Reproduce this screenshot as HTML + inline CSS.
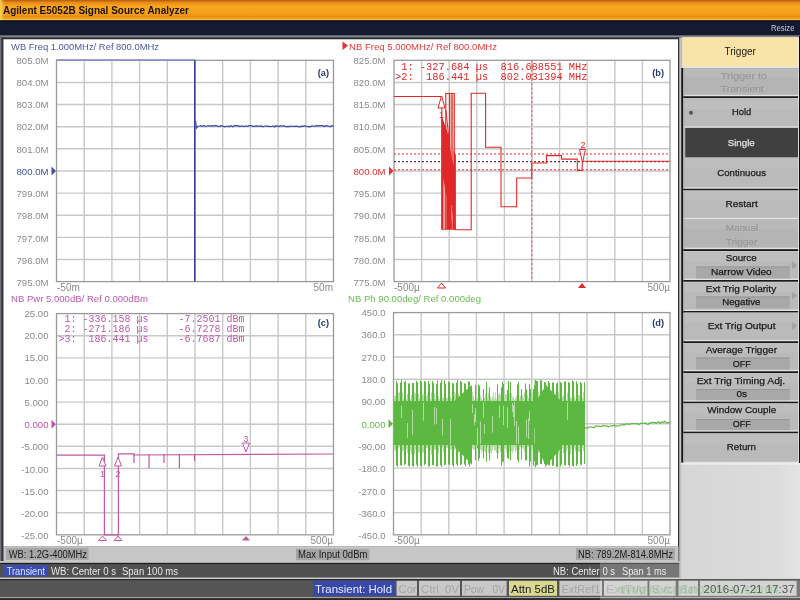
<!DOCTYPE html>
<html><head><meta charset="utf-8"><title>E5052B</title>
<style>html,body{margin:0;padding:0;width:800px;height:600px;overflow:hidden;background:#4c4c4c}svg{display:block;will-change:transform}</style>
</head><body><svg width="800" height="600" viewBox="0 0 800 600">
<rect x="0" y="0" width="800" height="600" fill="#4c4c4c"/>
<defs><linearGradient id="tg" x1="0" y1="0" x2="0" y2="1">
<stop offset="0" stop-color="#b85a10"/><stop offset="0.12" stop-color="#e48a18"/>
<stop offset="0.3" stop-color="#f8a61e"/><stop offset="0.6" stop-color="#f6a21c"/><stop offset="0.84" stop-color="#ea8c18"/><stop offset="0.93" stop-color="#f2b030"/><stop offset="1" stop-color="#f8d040"/></linearGradient>
<linearGradient id="tgl" x1="0" y1="0" x2="1" y2="0">
<stop offset="0" stop-color="#ffe060" stop-opacity="0.8"/><stop offset="0.006" stop-color="#ffe060" stop-opacity="0"/></linearGradient>
</defs>
<rect x="0" y="0" width="800" height="20.5" fill="url(#tg)"/>
<rect x="0" y="0" width="800" height="20.5" fill="url(#tgl)"/>
<text x="3" y="14.3" font-family="Liberation Sans" font-size="10" fill="#1c1408" text-anchor="start" textLength="186" lengthAdjust="spacingAndGlyphs" font-weight="bold" >Agilent E5052B Signal Source Analyzer</text>
<rect x="0" y="20.5" width="800" height="15" fill="#141a30"/>
<rect x="0" y="20.5" width="800" height="1" fill="#0a0c14"/>
<text x="771" y="30.6" font-family="Liberation Sans" font-size="8.6" fill="#c8ccd8" text-anchor="start" textLength="23.5" lengthAdjust="spacingAndGlyphs" >Resize</text>
<rect x="0" y="35.5" width="800" height="2" fill="#8a8a92"/>
<rect x="0" y="37.5" width="681" height="1.8" fill="#2c2c34"/>
<rect x="0" y="35.5" width="1.5" height="528" fill="#74747c"/>
<rect x="1.5" y="37.5" width="2" height="526" fill="#34343c"/>
<rect x="3.5" y="39.3" width="675" height="507" fill="#ffffff"/>
<rect x="678" y="37.5" width="1.3" height="526" fill="#303036"/>
<line x1="84.20" y1="60.3" x2="84.20" y2="281.6" stroke="#c8c8c8" stroke-width="1.4"/>
<line x1="111.90" y1="60.3" x2="111.90" y2="281.6" stroke="#c8c8c8" stroke-width="1.4"/>
<line x1="139.60" y1="60.3" x2="139.60" y2="281.6" stroke="#c8c8c8" stroke-width="1.4"/>
<line x1="167.30" y1="60.3" x2="167.30" y2="281.6" stroke="#c8c8c8" stroke-width="1.4"/>
<line x1="195.00" y1="60.3" x2="195.00" y2="281.6" stroke="#c8c8c8" stroke-width="1.4"/>
<line x1="222.70" y1="60.3" x2="222.70" y2="281.6" stroke="#c8c8c8" stroke-width="1.4"/>
<line x1="250.40" y1="60.3" x2="250.40" y2="281.6" stroke="#c8c8c8" stroke-width="1.4"/>
<line x1="278.10" y1="60.3" x2="278.10" y2="281.6" stroke="#c8c8c8" stroke-width="1.4"/>
<line x1="305.80" y1="60.3" x2="305.80" y2="281.6" stroke="#c8c8c8" stroke-width="1.4"/>
<line x1="56.5" y1="82.43" x2="333.5" y2="82.43" stroke="#c8c8c8" stroke-width="1.4"/>
<line x1="56.5" y1="104.56" x2="333.5" y2="104.56" stroke="#c8c8c8" stroke-width="1.4"/>
<line x1="56.5" y1="126.69" x2="333.5" y2="126.69" stroke="#c8c8c8" stroke-width="1.4"/>
<line x1="56.5" y1="148.82" x2="333.5" y2="148.82" stroke="#c8c8c8" stroke-width="1.4"/>
<line x1="56.5" y1="170.95" x2="333.5" y2="170.95" stroke="#c8c8c8" stroke-width="1.4"/>
<line x1="56.5" y1="193.08" x2="333.5" y2="193.08" stroke="#c8c8c8" stroke-width="1.4"/>
<line x1="56.5" y1="215.21" x2="333.5" y2="215.21" stroke="#c8c8c8" stroke-width="1.4"/>
<line x1="56.5" y1="237.34" x2="333.5" y2="237.34" stroke="#c8c8c8" stroke-width="1.4"/>
<line x1="56.5" y1="259.47" x2="333.5" y2="259.47" stroke="#c8c8c8" stroke-width="1.4"/>
<rect x="56.5" y="60.3" width="277.0" height="221.3" fill="none" stroke="#9a9a9a" stroke-width="1.3"/>
<line x1="421.60" y1="60.3" x2="421.60" y2="281.6" stroke="#c8c8c8" stroke-width="1.4"/>
<line x1="449.20" y1="60.3" x2="449.20" y2="281.6" stroke="#c8c8c8" stroke-width="1.4"/>
<line x1="476.80" y1="60.3" x2="476.80" y2="281.6" stroke="#c8c8c8" stroke-width="1.4"/>
<line x1="504.40" y1="60.3" x2="504.40" y2="281.6" stroke="#c8c8c8" stroke-width="1.4"/>
<line x1="532.00" y1="60.3" x2="532.00" y2="281.6" stroke="#c8c8c8" stroke-width="1.4"/>
<line x1="559.60" y1="60.3" x2="559.60" y2="281.6" stroke="#c8c8c8" stroke-width="1.4"/>
<line x1="587.20" y1="60.3" x2="587.20" y2="281.6" stroke="#c8c8c8" stroke-width="1.4"/>
<line x1="614.80" y1="60.3" x2="614.80" y2="281.6" stroke="#c8c8c8" stroke-width="1.4"/>
<line x1="642.40" y1="60.3" x2="642.40" y2="281.6" stroke="#c8c8c8" stroke-width="1.4"/>
<line x1="394" y1="82.43" x2="670" y2="82.43" stroke="#c8c8c8" stroke-width="1.4"/>
<line x1="394" y1="104.56" x2="670" y2="104.56" stroke="#c8c8c8" stroke-width="1.4"/>
<line x1="394" y1="126.69" x2="670" y2="126.69" stroke="#c8c8c8" stroke-width="1.4"/>
<line x1="394" y1="148.82" x2="670" y2="148.82" stroke="#c8c8c8" stroke-width="1.4"/>
<line x1="394" y1="170.95" x2="670" y2="170.95" stroke="#c8c8c8" stroke-width="1.4"/>
<line x1="394" y1="193.08" x2="670" y2="193.08" stroke="#c8c8c8" stroke-width="1.4"/>
<line x1="394" y1="215.21" x2="670" y2="215.21" stroke="#c8c8c8" stroke-width="1.4"/>
<line x1="394" y1="237.34" x2="670" y2="237.34" stroke="#c8c8c8" stroke-width="1.4"/>
<line x1="394" y1="259.47" x2="670" y2="259.47" stroke="#c8c8c8" stroke-width="1.4"/>
<rect x="394" y="60.3" width="276" height="221.3" fill="none" stroke="#9a9a9a" stroke-width="1.3"/>
<line x1="84.20" y1="313.6" x2="84.20" y2="534.8" stroke="#c8c8c8" stroke-width="1.4"/>
<line x1="111.90" y1="313.6" x2="111.90" y2="534.8" stroke="#c8c8c8" stroke-width="1.4"/>
<line x1="139.60" y1="313.6" x2="139.60" y2="534.8" stroke="#c8c8c8" stroke-width="1.4"/>
<line x1="167.30" y1="313.6" x2="167.30" y2="534.8" stroke="#c8c8c8" stroke-width="1.4"/>
<line x1="195.00" y1="313.6" x2="195.00" y2="534.8" stroke="#c8c8c8" stroke-width="1.4"/>
<line x1="222.70" y1="313.6" x2="222.70" y2="534.8" stroke="#c8c8c8" stroke-width="1.4"/>
<line x1="250.40" y1="313.6" x2="250.40" y2="534.8" stroke="#c8c8c8" stroke-width="1.4"/>
<line x1="278.10" y1="313.6" x2="278.10" y2="534.8" stroke="#c8c8c8" stroke-width="1.4"/>
<line x1="305.80" y1="313.6" x2="305.80" y2="534.8" stroke="#c8c8c8" stroke-width="1.4"/>
<line x1="56.5" y1="335.72" x2="333.5" y2="335.72" stroke="#c8c8c8" stroke-width="1.4"/>
<line x1="56.5" y1="357.84" x2="333.5" y2="357.84" stroke="#c8c8c8" stroke-width="1.4"/>
<line x1="56.5" y1="379.96" x2="333.5" y2="379.96" stroke="#c8c8c8" stroke-width="1.4"/>
<line x1="56.5" y1="402.08" x2="333.5" y2="402.08" stroke="#c8c8c8" stroke-width="1.4"/>
<line x1="56.5" y1="424.20" x2="333.5" y2="424.20" stroke="#c8c8c8" stroke-width="1.4"/>
<line x1="56.5" y1="446.32" x2="333.5" y2="446.32" stroke="#c8c8c8" stroke-width="1.4"/>
<line x1="56.5" y1="468.44" x2="333.5" y2="468.44" stroke="#c8c8c8" stroke-width="1.4"/>
<line x1="56.5" y1="490.56" x2="333.5" y2="490.56" stroke="#c8c8c8" stroke-width="1.4"/>
<line x1="56.5" y1="512.68" x2="333.5" y2="512.68" stroke="#c8c8c8" stroke-width="1.4"/>
<rect x="56.5" y="313.6" width="277.0" height="221.19999999999993" fill="none" stroke="#9a9a9a" stroke-width="1.3"/>
<line x1="421.15" y1="312.6" x2="421.15" y2="534.8" stroke="#c8c8c8" stroke-width="1.4"/>
<line x1="448.80" y1="312.6" x2="448.80" y2="534.8" stroke="#c8c8c8" stroke-width="1.4"/>
<line x1="476.45" y1="312.6" x2="476.45" y2="534.8" stroke="#c8c8c8" stroke-width="1.4"/>
<line x1="504.10" y1="312.6" x2="504.10" y2="534.8" stroke="#c8c8c8" stroke-width="1.4"/>
<line x1="531.75" y1="312.6" x2="531.75" y2="534.8" stroke="#c8c8c8" stroke-width="1.4"/>
<line x1="559.40" y1="312.6" x2="559.40" y2="534.8" stroke="#c8c8c8" stroke-width="1.4"/>
<line x1="587.05" y1="312.6" x2="587.05" y2="534.8" stroke="#c8c8c8" stroke-width="1.4"/>
<line x1="614.70" y1="312.6" x2="614.70" y2="534.8" stroke="#c8c8c8" stroke-width="1.4"/>
<line x1="642.35" y1="312.6" x2="642.35" y2="534.8" stroke="#c8c8c8" stroke-width="1.4"/>
<line x1="393.5" y1="334.82" x2="670" y2="334.82" stroke="#c8c8c8" stroke-width="1.4"/>
<line x1="393.5" y1="357.04" x2="670" y2="357.04" stroke="#c8c8c8" stroke-width="1.4"/>
<line x1="393.5" y1="379.26" x2="670" y2="379.26" stroke="#c8c8c8" stroke-width="1.4"/>
<line x1="393.5" y1="401.48" x2="670" y2="401.48" stroke="#c8c8c8" stroke-width="1.4"/>
<line x1="393.5" y1="423.70" x2="670" y2="423.70" stroke="#c8c8c8" stroke-width="1.4"/>
<line x1="393.5" y1="445.92" x2="670" y2="445.92" stroke="#c8c8c8" stroke-width="1.4"/>
<line x1="393.5" y1="468.14" x2="670" y2="468.14" stroke="#c8c8c8" stroke-width="1.4"/>
<line x1="393.5" y1="490.36" x2="670" y2="490.36" stroke="#c8c8c8" stroke-width="1.4"/>
<line x1="393.5" y1="512.58" x2="670" y2="512.58" stroke="#c8c8c8" stroke-width="1.4"/>
<rect x="393.5" y="312.6" width="276.5" height="222.19999999999993" fill="none" stroke="#9a9a9a" stroke-width="1.3"/>
<text x="48.5" y="63.599999999999994" font-family="Liberation Sans" font-size="9.6" fill="#8a8a8a" text-anchor="end" >805.0M</text>
<text x="48.5" y="85.85" font-family="Liberation Sans" font-size="9.6" fill="#8a8a8a" text-anchor="end" >804.0M</text>
<text x="48.5" y="108.10000000000001" font-family="Liberation Sans" font-size="9.6" fill="#8a8a8a" text-anchor="end" >803.0M</text>
<text x="48.5" y="130.35000000000002" font-family="Liberation Sans" font-size="9.6" fill="#8a8a8a" text-anchor="end" >802.0M</text>
<text x="48.5" y="152.60000000000002" font-family="Liberation Sans" font-size="9.6" fill="#8a8a8a" text-anchor="end" >801.0M</text>
<text x="48.5" y="174.85000000000002" font-family="Liberation Sans" font-size="9.6" fill="#4050a0" text-anchor="end" >800.0M</text>
<text x="48.5" y="197.10000000000002" font-family="Liberation Sans" font-size="9.6" fill="#8a8a8a" text-anchor="end" >799.0M</text>
<text x="48.5" y="219.35000000000002" font-family="Liberation Sans" font-size="9.6" fill="#8a8a8a" text-anchor="end" >798.0M</text>
<text x="48.5" y="241.60000000000002" font-family="Liberation Sans" font-size="9.6" fill="#8a8a8a" text-anchor="end" >797.0M</text>
<text x="48.5" y="263.85" font-family="Liberation Sans" font-size="9.6" fill="#8a8a8a" text-anchor="end" >796.0M</text>
<text x="48.5" y="286.1" font-family="Liberation Sans" font-size="9.6" fill="#8a8a8a" text-anchor="end" >795.0M</text>
<text x="385.5" y="63.599999999999994" font-family="Liberation Sans" font-size="9.6" fill="#8a8a8a" text-anchor="end" >825.0M</text>
<text x="385.5" y="85.85" font-family="Liberation Sans" font-size="9.6" fill="#8a8a8a" text-anchor="end" >820.0M</text>
<text x="385.5" y="108.10000000000001" font-family="Liberation Sans" font-size="9.6" fill="#8a8a8a" text-anchor="end" >815.0M</text>
<text x="385.5" y="130.35000000000002" font-family="Liberation Sans" font-size="9.6" fill="#8a8a8a" text-anchor="end" >810.0M</text>
<text x="385.5" y="152.60000000000002" font-family="Liberation Sans" font-size="9.6" fill="#8a8a8a" text-anchor="end" >805.0M</text>
<text x="385.5" y="174.85000000000002" font-family="Liberation Sans" font-size="9.6" fill="#e03030" text-anchor="end" >800.0M</text>
<text x="385.5" y="197.10000000000002" font-family="Liberation Sans" font-size="9.6" fill="#8a8a8a" text-anchor="end" >795.0M</text>
<text x="385.5" y="219.35000000000002" font-family="Liberation Sans" font-size="9.6" fill="#8a8a8a" text-anchor="end" >790.0M</text>
<text x="385.5" y="241.60000000000002" font-family="Liberation Sans" font-size="9.6" fill="#8a8a8a" text-anchor="end" >785.0M</text>
<text x="385.5" y="263.85" font-family="Liberation Sans" font-size="9.6" fill="#8a8a8a" text-anchor="end" >780.0M</text>
<text x="385.5" y="286.1" font-family="Liberation Sans" font-size="9.6" fill="#8a8a8a" text-anchor="end" >775.0M</text>
<text x="48.5" y="316.90000000000003" font-family="Liberation Sans" font-size="9.6" fill="#8a8a8a" text-anchor="end" >25.00</text>
<text x="48.5" y="339.14000000000004" font-family="Liberation Sans" font-size="9.6" fill="#8a8a8a" text-anchor="end" >20.00</text>
<text x="48.5" y="361.38000000000005" font-family="Liberation Sans" font-size="9.6" fill="#8a8a8a" text-anchor="end" >15.00</text>
<text x="48.5" y="383.62" font-family="Liberation Sans" font-size="9.6" fill="#8a8a8a" text-anchor="end" >10.00</text>
<text x="48.5" y="405.86" font-family="Liberation Sans" font-size="9.6" fill="#8a8a8a" text-anchor="end" >5.000</text>
<text x="48.5" y="428.1" font-family="Liberation Sans" font-size="9.6" fill="#c050a8" text-anchor="end" >0.000</text>
<text x="48.5" y="450.34" font-family="Liberation Sans" font-size="9.6" fill="#8a8a8a" text-anchor="end" >-5.000</text>
<text x="48.5" y="472.58" font-family="Liberation Sans" font-size="9.6" fill="#8a8a8a" text-anchor="end" >-10.00</text>
<text x="48.5" y="494.82" font-family="Liberation Sans" font-size="9.6" fill="#8a8a8a" text-anchor="end" >-15.00</text>
<text x="48.5" y="517.06" font-family="Liberation Sans" font-size="9.6" fill="#8a8a8a" text-anchor="end" >-20.00</text>
<text x="48.5" y="539.3" font-family="Liberation Sans" font-size="9.6" fill="#8a8a8a" text-anchor="end" >-25.00</text>
<text x="385.5" y="315.90000000000003" font-family="Liberation Sans" font-size="9.6" fill="#8a8a8a" text-anchor="end" >450.0</text>
<text x="385.5" y="338.24" font-family="Liberation Sans" font-size="9.6" fill="#8a8a8a" text-anchor="end" >360.0</text>
<text x="385.5" y="360.58000000000004" font-family="Liberation Sans" font-size="9.6" fill="#8a8a8a" text-anchor="end" >270.0</text>
<text x="385.5" y="382.92" font-family="Liberation Sans" font-size="9.6" fill="#8a8a8a" text-anchor="end" >180.0</text>
<text x="385.5" y="405.26" font-family="Liberation Sans" font-size="9.6" fill="#8a8a8a" text-anchor="end" >90.00</text>
<text x="385.5" y="427.59999999999997" font-family="Liberation Sans" font-size="9.6" fill="#60b848" text-anchor="end" >0.000</text>
<text x="385.5" y="449.94" font-family="Liberation Sans" font-size="9.6" fill="#8a8a8a" text-anchor="end" >-90.00</text>
<text x="385.5" y="472.28" font-family="Liberation Sans" font-size="9.6" fill="#8a8a8a" text-anchor="end" >-180.0</text>
<text x="385.5" y="494.61999999999995" font-family="Liberation Sans" font-size="9.6" fill="#8a8a8a" text-anchor="end" >-270.0</text>
<text x="385.5" y="516.9599999999999" font-family="Liberation Sans" font-size="9.6" fill="#8a8a8a" text-anchor="end" >-360.0</text>
<text x="385.5" y="539.3" font-family="Liberation Sans" font-size="9.6" fill="#8a8a8a" text-anchor="end" >-450.0</text>
<path d="M51.5,166.45 L56,170.95 L51.5,175.45 Z" fill="#4050a0"/>
<path d="M389.0,166.45 L393.5,170.95 L389.0,175.45 Z" fill="#e03030"/>
<path d="M51.5,419.7 L56,424.2 L51.5,428.7 Z" fill="#c050a8"/>
<path d="M388.5,419.2 L393,423.7 L388.5,428.2 Z" fill="#60b848"/>
<text x="11" y="49.6" font-family="Liberation Sans" font-size="9.5" fill="#4a58a0" text-anchor="start" textLength="148" lengthAdjust="spacingAndGlyphs" >WB Freq 1.000MHz/ Ref 800.0MHz</text>
<path d="M342.5,41.5 L348,45.8 L342.5,50 Z" fill="#e03030"/>
<text x="349" y="49.6" font-family="Liberation Sans" font-size="9.5" fill="#e03838" text-anchor="start" textLength="148" lengthAdjust="spacingAndGlyphs" >NB Freq 5.000MHz/ Ref 800.0MHz</text>
<text x="11" y="302" font-family="Liberation Sans" font-size="9.5" fill="#c058a8" text-anchor="start" textLength="137" lengthAdjust="spacingAndGlyphs" >NB Pwr 5.000dB/ Ref 0.000dBm</text>
<text x="348" y="302" font-family="Liberation Sans" font-size="9.5" fill="#6cbc54" text-anchor="start" textLength="133" lengthAdjust="spacingAndGlyphs" >NB Ph 90.00deg/ Ref 0.000deg</text>
<text x="57" y="290.5" font-family="Liberation Sans" font-size="10" fill="#8a8a8a" text-anchor="start" >-50m</text>
<text x="333" y="290.5" font-family="Liberation Sans" font-size="10" fill="#8a8a8a" text-anchor="end" >50m</text>
<text x="394" y="290.5" font-family="Liberation Sans" font-size="10" fill="#8a8a8a" text-anchor="start" >-500µ</text>
<text x="670" y="290.5" font-family="Liberation Sans" font-size="10" fill="#8a8a8a" text-anchor="end" >500µ</text>
<text x="57" y="543.7" font-family="Liberation Sans" font-size="10" fill="#8a8a8a" text-anchor="start" >-500µ</text>
<text x="333" y="543.7" font-family="Liberation Sans" font-size="10" fill="#8a8a8a" text-anchor="end" >500µ</text>
<text x="394" y="543.7" font-family="Liberation Sans" font-size="10" fill="#8a8a8a" text-anchor="start" >-500µ</text>
<text x="670" y="543.7" font-family="Liberation Sans" font-size="10" fill="#8a8a8a" text-anchor="end" >500µ</text>
<text x="329" y="76" font-family="Liberation Sans" font-size="9.2" fill="#24386a" text-anchor="end" font-weight="bold" >(a)</text>
<text x="664" y="76" font-family="Liberation Sans" font-size="9.2" fill="#24386a" text-anchor="end" font-weight="bold" >(b)</text>
<text x="329" y="325.7" font-family="Liberation Sans" font-size="9.2" fill="#24386a" text-anchor="end" font-weight="bold" >(c)</text>
<text x="664" y="325.7" font-family="Liberation Sans" font-size="9.2" fill="#24386a" text-anchor="end" font-weight="bold" >(d)</text>
<polyline points="56.5,60.2 194.8,60.2" stroke="#8c8cc4" stroke-width="1.7" fill="none"/>
<line x1="194.8" y1="60.3" x2="194.8" y2="281.6" stroke="#2a3a9c" stroke-width="1.5"/>
<polyline points="195.5,121.0 196.5,128.0 198.0,126.2 199.5,126.0 201.0,125.7 202.5,126.4 204.0,125.6 205.5,126.3 207.0,126.0 208.5,125.6 210.0,126.2 211.5,125.6 213.0,126.1 214.5,125.6 216.0,125.6 217.5,126.1 219.0,126.7 220.5,125.7 222.0,125.8 223.5,126.4 225.0,126.8 226.5,126.3 228.0,126.1 229.5,126.9 231.0,125.6 232.5,126.7 234.0,125.9 235.5,125.7 237.0,125.7 238.5,125.9 240.0,126.6 241.5,125.8 243.0,126.3 244.5,126.4 246.0,126.0 247.5,126.3 249.0,125.6 250.5,125.6 252.0,125.8 253.5,126.5 255.0,126.1 256.5,125.9 258.0,126.3 259.5,126.1 261.0,125.9 262.5,126.6 264.0,126.5 265.5,125.8 267.0,126.3 268.5,126.2 270.0,126.7 271.5,126.5 273.0,125.9 274.5,126.9 276.0,125.7 277.5,126.1 279.0,126.6 280.5,125.7 282.0,126.2 283.5,125.6 285.0,126.4 286.5,126.6 288.0,126.3 289.5,126.7 291.0,125.9 292.5,126.5 294.0,126.3 295.5,126.3 297.0,126.1 298.5,126.7 300.0,126.8 301.5,126.2 303.0,126.4 304.5,125.6 306.0,126.5 307.5,126.4 309.0,126.9 310.5,126.7 312.0,125.9 313.5,126.0 315.0,126.4 316.5,125.5 318.0,126.1 319.5,125.7 321.0,125.7 322.5,125.6 324.0,126.6 325.5,125.7 327.0,125.8 328.5,126.0 330.0,126.7 331.5,125.6 333.0,126.1 333.5,126.3" stroke="#3848a0" stroke-width="1.2" fill="none"/>
<line x1="394" y1="154.0" x2="670" y2="154.0" stroke="#e02828" stroke-width="1" stroke-dasharray="2,2"/>
<line x1="394" y1="161.6" x2="670" y2="161.6" stroke="#503838" stroke-width="1.1" stroke-dasharray="2,2"/>
<line x1="394" y1="169.8" x2="670" y2="169.8" stroke="#e02828" stroke-width="1" stroke-dasharray="2,2"/>
<line x1="531.8" y1="60.3" x2="531.8" y2="281.6" stroke="#e85050" stroke-width="1" stroke-dasharray="2.5,2"/>
<path d="M394,96.5 L441.8,96.5" stroke="#e02828" stroke-width="1.1" fill="none"/>
<path d="M441.5,115 L446.7,130 L452,146 L455.3,155 L455.3,229.8 L441.5,229.8 Z" fill="#e02828"/>
<path d="M443.2,178 L446.5,196 L446.5,229 L443.2,229 Z" fill="#f6a49c"/>
<path d="M449.8,95 L453.6,95 L453.6,165 L449.8,150 Z" fill="#f8b8b0"/>
<path d="M452,205 L452,229" stroke="#f6a49c" stroke-width="1.2" fill="none"/>
<path d="M445.8,93.5 L445.8,229.8 M449.5,93.5 L449.5,229.8 M452,93.5 L452,200 M454.3,93.5 L454.3,229.8 M441.8,96.5 L441.8,229.8 M455.3,155 L455.3,229.8" stroke="#e02828" stroke-width="1.1" fill="none"/>
<path d="M445.3,93.5 L454.8,93.5" stroke="#e02828" stroke-width="1.1" fill="none"/>
<path d="M441.8,120 L455,229 M441.8,150 L452,229 M446,110 L455,200" stroke="#e02828" stroke-width="1" fill="none"/>
<polyline points="455,229.8 471.2,229.8 471.2,93.3 485.6,93.3 485.6,147.2 501,147.2 501,206.7 516.7,206.7 516.7,178 531.8,178 531.8,163 546.5,163 546.5,155.6 561.5,155.6 561.5,159.1 577.3,159.1 577.3,170.5 582,170.5 582.5,161.3 670,161.3" stroke="#e02828" stroke-width="1.1" fill="none"/>
<path d="M441.5,96 L438,108 L445,108 Z" fill="#ffffff" stroke="#e02828" stroke-width="1"/>
<text x="441.5" y="117.5" font-family="Liberation Sans" font-size="9" fill="#e02828" text-anchor="middle" >1</text>
<path d="M582.5,162.5 L579.5,149.5 L585.5,149.5 Z" fill="#ffffff" fill-opacity="0.6" stroke="#e02828" stroke-width="1"/>
<text x="583" y="148" font-family="Liberation Sans" font-size="9" fill="#e02828" text-anchor="middle" >2</text>
<path d="M441.5,283 L437.5,288 L445.5,288 Z" fill="#ffffff" stroke="#e02828" stroke-width="1"/>
<path d="M582,283 L578,288 L586,288 Z" fill="#e02828"/>
<text x="395" y="69.5" font-family="Liberation Mono" font-size="10.2" fill="#e02828" text-anchor="start" textLength="192.5" lengthAdjust="spacingAndGlyphs" style="white-space:pre"> 1: -327.684 µs  816.688551 MHz</text>
<text x="395" y="79.8" font-family="Liberation Mono" font-size="10.2" fill="#e02828" text-anchor="start" textLength="192.5" lengthAdjust="spacingAndGlyphs" style="white-space:pre">&gt;2:  186.441 µs  802.031394 MHz</text>
<polyline points="56.5,455.2 104.4,455.2 104.4,534.8 118.4,534.8 118.4,453.8 670,453.8" stroke="none" fill="none"/>
<polyline points="56.5,455.2 104.4,455.2 104.4,534.8 118.4,534.8 118.4,453.8 134,453.8 134,455 333.5,454" stroke="#c058a4" stroke-width="1.2" fill="none"/>
<line x1="134" y1="454" x2="134" y2="463" stroke="#c058a4" stroke-width="1.2"/>
<line x1="149" y1="454" x2="149" y2="468" stroke="#c058a4" stroke-width="1.2"/>
<line x1="164" y1="454" x2="164" y2="463" stroke="#c058a4" stroke-width="1.2"/>
<line x1="179.4" y1="454" x2="179.4" y2="468" stroke="#c058a4" stroke-width="1.2"/>
<line x1="194.6" y1="454" x2="194.6" y2="461" stroke="#c058a4" stroke-width="1.2"/>
<path d="M102.5,457 L99.0,466 L106.0,466 Z" fill="#ffffff" stroke="#c058a4" stroke-width="1"/>
<text x="102.5" y="476.5" font-family="Liberation Sans" font-size="9" fill="#c058a4" text-anchor="middle" >1</text>
<path d="M102.5,536 L98.5,540.5 L106.5,540.5 Z" fill="#ffffff" stroke="#c058a4" stroke-width="1"/>
<path d="M118,457 L114.5,466 L121.5,466 Z" fill="#ffffff" stroke="#c058a4" stroke-width="1"/>
<text x="118" y="476.5" font-family="Liberation Sans" font-size="9" fill="#c058a4" text-anchor="middle" >2</text>
<path d="M118,536 L114,540.5 L122,540.5 Z" fill="#ffffff" stroke="#c058a4" stroke-width="1"/>
<path d="M246,452 L242.5,443 L249.5,443 Z" fill="#ffffff" stroke="#c058a4" stroke-width="1"/>
<text x="246" y="441.5" font-family="Liberation Sans" font-size="9" fill="#c058a4" text-anchor="middle" >3</text>
<path d="M246,536 L242,540.5 L250,540.5 Z" fill="#c058a4"/>
<text x="58.4" y="321.5" font-family="Liberation Mono" font-size="10" fill="#c058a4" text-anchor="start" style="white-space:pre"> 1: -336.158 µs     -7.2501 dBm</text>
<text x="58.4" y="331.8" font-family="Liberation Mono" font-size="10" fill="#c058a4" text-anchor="start" style="white-space:pre"> 2: -271.186 µs     -6.7278 dBm</text>
<text x="58.4" y="342.1" font-family="Liberation Mono" font-size="10" fill="#c058a4" text-anchor="start" style="white-space:pre">&gt;3:  186.441 µs     -6.7687 dBm</text>
<path d="M394.5,395.6V402.0 M394.5,444.0V450.5 M395.5,395.7V402.0 M395.5,444.0V450.9 M398.5,392.7V402.0 M398.5,444.0V448.5 M399.5,392.3V402.0 M399.5,444.0V447.1 M401.5,405.7V417.8 M402.5,392.2V402.0 M402.5,444.0V451.3 M403.5,398.7V402.0 M403.5,444.0V450.8 M406.5,398.7V402.0 M406.5,444.0V449.3 M407.5,393.8V402.0 M407.5,444.0V452.7 M407.5,423.0V437.8 M410.5,399.3V402.0 M410.5,444.0V451.2 M411.5,395.2V402.0 M411.5,444.0V454.4 M412.5,410.0V434.4 M414.5,392.8V402.0 M414.5,444.0V454.5 M415.5,393.4V402.0 M415.5,444.0V450.5 M418.5,393.7V402.0 M418.5,444.0V452.8 M419.5,398.4V402.0 M419.5,444.0V452.6 M422.5,393.7V402.0 M422.5,444.0V452.9 M423.5,394.6V402.0 M423.5,444.0V452.6 M423.5,402.7V420.6 M426.5,396.6V402.0 M426.5,444.0V448.1 M427.5,393.2V402.0 M427.5,444.0V447.7 M430.5,399.1V402.0 M430.5,444.0V450.2 M431.5,392.8V402.0 M431.5,444.0V454.7 M434.5,393.4V402.0 M434.5,444.0V449.2 M434.5,406.9V424.4 M435.5,398.8V402.0 M435.5,444.0V450.1 M436.5,408.1V423.7 M438.5,396.6V402.0 M438.5,444.0V453.9 M439.5,399.1V402.0 M439.5,444.0V447.2 M442.5,397.6V402.0 M442.5,444.0V447.3 M442.5,419.1V435.3 M443.5,397.8V402.0 M443.5,444.0V452.4 M446.5,398.3V402.0 M446.5,444.0V447.7 M447.5,397.5V402.0 M447.5,444.0V447.8 M450.5,396.7V402.0 M450.5,444.0V450.1 M450.5,419.2V444.1 M451.5,399.0V402.0 M451.5,444.0V449.2 M454.5,392.2V402.0 M454.5,444.0V450.2 M455.5,393.8V402.0 M455.5,444.0V449.4 M458.5,393.6V402.0 M458.5,444.0V453.6 M459.5,397.3V402.0 M459.5,444.0V451.5 M462.5,399.0V402.0 M462.5,444.0V451.9 M463.5,394.5V402.0 M463.5,444.0V453.9 M466.5,395.6V402.0 M466.5,444.0V452.8 M467.5,395.3V402.0 M467.5,444.0V450.0 M469.5,426.2V434.9 M470.5,397.7V402.0 M470.5,444.0V450.4 M471.5,398.3V402.0 M471.5,444.0V454.8 M472.5,392.2V402.0 M472.5,444.0V448.4 M472.5,404.2V413.0 M473.5,395.6V402.0 M473.5,444.0V450.0 M474.5,399.7V402.0 M474.5,444.0V449.5 M474.5,414.3V425.3 M475.5,408.2V422.0 M476.5,396.2V402.0 M476.5,444.0V450.1 M477.5,398.3V402.0 M477.5,444.0V447.8 M477.5,428.0V448.3 M480.5,395.7V402.0 M480.5,444.0V449.8 M480.5,421.7V443.6 M481.5,397.7V402.0 M481.5,444.0V453.3 M482.5,399.8V402.0 M482.5,444.0V450.7 M483.5,402.5V418.0 M484.5,398.1V402.0 M484.5,444.0V451.1 M484.5,424.3V433.4 M485.5,393.4V402.0 M485.5,444.0V452.3 M487.5,397.5V402.0 M487.5,444.0V447.4 M488.5,392.7V402.0 M488.5,444.0V453.2 M490.5,396.5V402.0 M490.5,444.0V452.5 M491.5,399.2V402.0 M491.5,444.0V453.3 M492.5,396.2V402.0 M492.5,444.0V450.4 M492.5,416.1V432.6 M493.5,392.2V402.0 M493.5,444.0V447.2 M494.5,398.4V402.0 M494.5,444.0V450.5 M495.5,392.5V402.0 M495.5,444.0V450.7 M496.5,399.4V402.0 M496.5,444.0V452.8 M498.5,394.5V402.0 M498.5,444.0V453.5 M499.5,393.0V402.0 M499.5,444.0V448.8 M499.5,405.8V417.7 M500.5,394.6V402.0 M500.5,444.0V452.2 M503.5,406.1V424.9 M504.5,396.2V402.0 M504.5,444.0V448.2 M505.5,393.9V402.0 M505.5,444.0V449.1 M506.5,394.5V402.0 M506.5,444.0V452.5 M507.5,407.2V427.5 M509.5,393.0V402.0 M509.5,444.0V451.8 M511.5,392.9V402.0 M511.5,444.0V451.0 M512.5,397.5V402.0 M512.5,444.0V453.5 M512.5,403.2V411.8 M513.5,396.1V402.0 M513.5,444.0V450.5 M513.5,405.5V417.0 M514.5,399.9V402.0 M514.5,444.0V447.6 M514.5,401.9V426.0 M515.5,398.1V402.0 M515.5,444.0V452.4 M516.5,395.4V402.0 M516.5,444.0V450.2 M516.5,421.0V443.4 M518.5,426.8V448.4 M519.5,398.9V402.0 M519.5,444.0V450.0 M520.5,396.0V402.0 M520.5,444.0V447.1 M522.5,395.2V402.0 M522.5,444.0V447.8 M523.5,398.1V402.0 M523.5,444.0V448.9 M524.5,392.6V402.0 M524.5,444.0V452.3 M526.5,419.8V437.5 M527.5,395.1V402.0 M527.5,444.0V447.0 M528.5,398.1V402.0 M528.5,444.0V447.2 M528.5,418.5V439.0 M529.5,411.3V420.9 M531.5,396.5V402.0 M531.5,444.0V447.0 M532.5,392.6V402.0 M532.5,444.0V450.2 M534.5,428.4V443.5 M535.5,396.2V402.0 M535.5,444.0V450.2 M538.5,392.1V402.0 M538.5,444.0V453.0 M538.5,404.7V425.5 M539.5,395.1V402.0 M539.5,444.0V447.8 M542.5,395.8V402.0 M542.5,444.0V447.2 M543.5,396.2V402.0 M543.5,444.0V447.5 M546.5,395.6V402.0 M546.5,444.0V453.4 M546.5,415.8V426.0 M547.5,395.5V402.0 M547.5,444.0V449.7 M550.5,399.6V402.0 M550.5,444.0V449.1 M551.5,392.9V402.0 M551.5,444.0V447.9 M554.5,397.1V402.0 M554.5,444.0V449.0 M555.5,394.0V402.0 M555.5,444.0V447.2 M556.5,408.1V423.4 M558.5,392.6V402.0 M558.5,444.0V454.3 M559.5,396.4V402.0 M559.5,444.0V450.0 M561.5,403.6V425.3 M562.5,397.0V402.0 M562.5,444.0V448.8 M563.5,395.4V402.0 M563.5,444.0V452.9 M566.5,399.4V402.0 M566.5,444.0V451.6 M567.5,392.8V402.0 M567.5,444.0V448.0 M567.5,402.5V420.1 M570.5,397.3V402.0 M570.5,444.0V454.3 M571.5,397.8V402.0 M571.5,444.0V449.4 M574.5,396.6V402.0 M574.5,444.0V447.7 M575.5,399.3V402.0 M575.5,444.0V451.5 M578.5,394.9V402.0 M578.5,444.0V452.1 M579.5,395.2V402.0 M579.5,444.0V451.9 M582.5,398.1V402.0 M582.5,444.0V448.0 M583.5,392.2V402.0 M583.5,444.0V450.9" stroke="#b6dea6" stroke-width="1.05" fill="none"/>
<path d="M394.5,401.0V445.0 M395.5,401.0V445.0 M396.5,380.7V402.0 M396.5,444.0V465.5 M396.5,401.0V445.0 M397.5,383.2V402.0 M397.5,444.0V466.7 M397.5,401.0V445.0 M398.5,401.0V445.0 M399.5,401.0V445.0 M400.5,382.6V402.0 M400.5,444.0V465.2 M400.5,401.0V445.0 M401.5,380.1V402.0 M401.5,444.0V465.4 M401.5,401.0V405.7 M401.5,417.8V445.0 M402.5,401.0V445.0 M403.5,401.0V445.0 M404.5,382.0V402.0 M404.5,444.0V465.0 M404.5,401.0V445.0 M405.5,381.1V402.0 M405.5,444.0V464.0 M405.5,401.0V445.0 M406.5,401.0V445.0 M407.5,401.0V423.0 M407.5,437.8V445.0 M408.5,383.4V402.0 M408.5,444.0V465.8 M408.5,401.0V445.0 M409.5,383.4V402.0 M409.5,444.0V467.0 M409.5,401.0V445.0 M410.5,401.0V445.0 M411.5,401.0V445.0 M412.5,383.1V402.0 M412.5,444.0V466.2 M412.5,401.0V410.0 M412.5,434.4V445.0 M413.5,383.0V402.0 M413.5,444.0V466.6 M413.5,401.0V445.0 M414.5,401.0V445.0 M415.5,401.0V445.0 M416.5,380.8V402.0 M416.5,444.0V464.8 M416.5,401.0V445.0 M417.5,382.6V402.0 M417.5,444.0V466.7 M417.5,401.0V445.0 M418.5,401.0V445.0 M419.5,401.0V445.0 M420.5,380.8V402.0 M420.5,444.0V465.8 M420.5,401.0V445.0 M421.5,382.6V402.0 M421.5,444.0V466.7 M421.5,401.0V445.0 M422.5,401.0V445.0 M423.5,401.0V402.7 M423.5,420.6V445.0 M424.5,381.0V402.0 M424.5,444.0V465.2 M424.5,401.0V445.0 M425.5,381.8V402.0 M425.5,444.0V464.1 M425.5,401.0V445.0 M426.5,401.0V445.0 M427.5,401.0V445.0 M428.5,381.0V402.0 M428.5,444.0V466.4 M428.5,401.0V445.0 M429.5,383.8V402.0 M429.5,444.0V466.4 M429.5,401.0V445.0 M430.5,401.0V445.0 M431.5,401.0V445.0 M432.5,381.0V402.0 M432.5,444.0V464.9 M432.5,401.0V445.0 M433.5,383.3V402.0 M433.5,444.0V465.2 M433.5,401.0V445.0 M434.5,401.0V406.9 M434.5,424.4V445.0 M435.5,401.0V445.0 M436.5,383.7V402.0 M436.5,444.0V466.4 M436.5,401.0V408.1 M436.5,423.7V445.0 M437.5,380.2V402.0 M437.5,444.0V466.5 M437.5,401.0V445.0 M438.5,401.0V445.0 M439.5,401.0V445.0 M440.5,382.8V402.0 M440.5,444.0V465.2 M440.5,401.0V445.0 M441.5,380.1V402.0 M441.5,444.0V466.9 M441.5,401.0V445.0 M442.5,401.0V419.1 M442.5,435.3V445.0 M443.5,401.0V445.0 M444.5,380.3V402.0 M444.5,444.0V465.4 M444.5,401.0V445.0 M445.5,383.6V402.0 M445.5,444.0V464.8 M445.5,401.0V445.0 M446.5,401.0V445.0 M447.5,401.0V445.0 M448.5,381.7V402.0 M448.5,444.0V464.6 M448.5,401.0V445.0 M449.5,382.3V402.0 M449.5,444.0V465.1 M449.5,401.0V445.0 M450.5,401.0V419.2 M450.5,444.1V445.0 M451.5,401.0V445.0 M452.5,382.9V402.0 M452.5,444.0V465.3 M452.5,401.0V445.0 M453.5,383.4V402.0 M453.5,444.0V466.7 M453.5,401.0V445.0 M454.5,401.0V445.0 M455.5,401.0V445.0 M456.5,382.5V402.0 M456.5,444.0V464.2 M456.5,401.0V445.0 M457.5,380.0V402.0 M457.5,444.0V466.1 M457.5,401.0V445.0 M458.5,401.0V445.0 M459.5,401.0V445.0 M460.5,381.3V402.0 M460.5,444.0V465.0 M460.5,401.0V445.0 M461.5,381.7V402.0 M461.5,444.0V464.6 M461.5,401.0V445.0 M462.5,401.0V445.0 M463.5,401.0V445.0 M464.5,383.3V402.0 M464.5,444.0V464.5 M464.5,401.0V445.0 M465.5,383.8V402.0 M465.5,444.0V466.2 M465.5,401.0V445.0 M466.5,401.0V445.0 M467.5,401.0V445.0 M468.5,381.3V402.0 M468.5,444.0V464.5 M468.5,401.0V445.0 M469.5,381.8V402.0 M469.5,444.0V466.8 M469.5,401.0V426.2 M469.5,434.9V445.0 M470.5,401.0V445.0 M471.5,401.0V445.0 M472.5,401.0V404.2 M472.5,413.0V445.0 M473.5,401.0V445.0 M474.5,401.0V414.3 M474.5,425.3V445.0 M475.5,384.7V402.0 M475.5,444.0V459.9 M475.5,401.0V408.2 M475.5,422.0V445.0 M476.5,401.0V445.0 M477.5,401.0V428.0 M477.5,448.3V445.0 M478.5,384.5V402.0 M478.5,444.0V460.7 M478.5,401.0V445.0 M479.5,385.7V402.0 M479.5,444.0V458.2 M479.5,401.0V445.0 M480.5,401.0V421.7 M480.5,443.6V445.0 M481.5,401.0V445.0 M482.5,401.0V445.0 M483.5,389.1V402.0 M483.5,444.0V458.4 M483.5,401.0V402.5 M483.5,418.0V445.0 M484.5,401.0V424.3 M484.5,433.4V445.0 M485.5,401.0V445.0 M486.5,381.5V402.0 M486.5,444.0V461.8 M486.5,401.0V445.0 M487.5,401.0V445.0 M488.5,401.0V445.0 M489.5,387.3V402.0 M489.5,444.0V460.6 M489.5,401.0V445.0 M490.5,401.0V445.0 M491.5,401.0V445.0 M492.5,401.0V416.1 M492.5,432.6V445.0 M493.5,401.0V445.0 M494.5,401.0V445.0 M495.5,401.0V445.0 M496.5,401.0V445.0 M497.5,384.3V402.0 M497.5,444.0V458.8 M497.5,401.0V445.0 M498.5,401.0V445.0 M499.5,401.0V405.8 M499.5,417.7V445.0 M500.5,401.0V445.0 M501.5,387.3V402.0 M501.5,444.0V465.8 M501.5,401.0V445.0 M502.5,382.0V402.0 M502.5,444.0V461.7 M502.5,401.0V445.0 M503.5,384.1V402.0 M503.5,444.0V461.7 M503.5,401.0V406.1 M503.5,424.9V445.0 M504.5,401.0V445.0 M505.5,401.0V445.0 M506.5,401.0V445.0 M507.5,390.0V402.0 M507.5,444.0V458.1 M507.5,401.0V407.2 M507.5,427.5V445.0 M508.5,381.0V402.0 M508.5,444.0V458.7 M508.5,401.0V445.0 M509.5,401.0V445.0 M510.5,382.0V402.0 M510.5,444.0V460.2 M510.5,401.0V445.0 M511.5,401.0V445.0 M512.5,401.0V403.2 M512.5,411.8V445.0 M513.5,401.0V405.5 M513.5,417.0V445.0 M514.5,401.0V401.9 M514.5,426.0V445.0 M515.5,401.0V445.0 M516.5,401.0V421.0 M516.5,443.4V445.0 M517.5,384.5V402.0 M517.5,444.0V459.6 M517.5,401.0V445.0 M518.5,381.7V402.0 M518.5,444.0V461.9 M518.5,401.0V426.8 M518.5,448.4V445.0 M519.5,401.0V445.0 M520.5,401.0V445.0 M521.5,389.1V402.0 M521.5,444.0V459.6 M521.5,401.0V445.0 M522.5,401.0V445.0 M523.5,401.0V445.0 M524.5,401.0V445.0 M525.5,383.6V402.0 M525.5,444.0V460.6 M525.5,401.0V445.0 M526.5,389.4V402.0 M526.5,444.0V460.3 M526.5,401.0V419.8 M526.5,437.5V445.0 M527.5,401.0V445.0 M528.5,401.0V418.5 M528.5,439.0V445.0 M529.5,384.0V402.0 M529.5,444.0V466.5 M529.5,401.0V411.3 M529.5,420.9V445.0 M530.5,389.1V402.0 M530.5,444.0V461.5 M530.5,401.0V445.0 M531.5,401.0V445.0 M532.5,401.0V445.0 M533.5,389.3V402.0 M533.5,444.0V465.4 M533.5,401.0V445.0 M534.5,385.0V402.0 M534.5,444.0V460.9 M534.5,401.0V428.4 M534.5,443.5V445.0 M535.5,401.0V445.0 M536.5,381.1V402.0 M536.5,444.0V465.0 M536.5,401.0V445.0 M537.5,381.1V402.0 M537.5,444.0V464.9 M537.5,401.0V445.0 M538.5,401.0V404.7 M538.5,425.5V445.0 M539.5,401.0V445.0 M540.5,380.2V402.0 M540.5,444.0V464.0 M540.5,401.0V445.0 M541.5,380.3V402.0 M541.5,444.0V464.3 M541.5,401.0V445.0 M542.5,401.0V445.0 M543.5,401.0V445.0 M544.5,381.9V402.0 M544.5,444.0V464.1 M544.5,401.0V445.0 M545.5,382.4V402.0 M545.5,444.0V466.7 M545.5,401.0V445.0 M546.5,401.0V415.8 M546.5,426.0V445.0 M547.5,401.0V445.0 M548.5,381.0V402.0 M548.5,444.0V465.3 M548.5,401.0V445.0 M549.5,383.1V402.0 M549.5,444.0V465.4 M549.5,401.0V445.0 M550.5,401.0V445.0 M551.5,401.0V445.0 M552.5,382.5V402.0 M552.5,444.0V465.9 M552.5,401.0V445.0 M553.5,382.7V402.0 M553.5,444.0V465.3 M553.5,401.0V445.0 M554.5,401.0V445.0 M555.5,401.0V445.0 M556.5,383.5V402.0 M556.5,444.0V466.9 M556.5,401.0V408.1 M556.5,423.4V445.0 M557.5,382.5V402.0 M557.5,444.0V466.7 M557.5,401.0V445.0 M558.5,401.0V445.0 M559.5,401.0V445.0 M560.5,381.9V402.0 M560.5,444.0V466.4 M560.5,401.0V445.0 M561.5,383.0V402.0 M561.5,444.0V464.5 M561.5,401.0V403.6 M561.5,425.3V445.0 M562.5,401.0V445.0 M563.5,401.0V445.0 M564.5,381.5V402.0 M564.5,444.0V465.0 M564.5,401.0V445.0 M565.5,381.3V402.0 M565.5,444.0V465.4 M565.5,401.0V445.0 M566.5,401.0V445.0 M567.5,401.0V402.5 M567.5,420.1V445.0 M568.5,381.9V402.0 M568.5,444.0V464.9 M568.5,401.0V445.0 M569.5,383.1V402.0 M569.5,444.0V466.8 M569.5,401.0V445.0 M570.5,401.0V445.0 M571.5,401.0V445.0 M572.5,380.6V402.0 M572.5,444.0V465.9 M572.5,401.0V445.0 M573.5,381.5V402.0 M573.5,444.0V466.6 M573.5,401.0V445.0 M574.5,401.0V445.0 M575.5,401.0V445.0 M576.5,381.2V402.0 M576.5,444.0V466.0 M576.5,401.0V445.0 M577.5,383.7V402.0 M577.5,444.0V464.3 M577.5,401.0V445.0 M578.5,401.0V445.0 M579.5,401.0V445.0 M580.5,382.3V402.0 M580.5,444.0V464.6 M580.5,401.0V445.0 M581.5,383.3V402.0 M581.5,444.0V465.3 M581.5,401.0V445.0 M582.5,401.0V445.0 M583.5,401.0V445.0 M584.5,382.3V402.0 M584.5,444.0V464.1 M584.5,401.0V445.0" stroke="#5cb840" stroke-width="1.05" fill="none"/>
<path d="M455,400 L472,385 L472,465 L455,447 Z" fill="#5cb840"/>
<path d="M537,400 L546,385 L562,402 L562,447 L546,466 L537,447 Z" fill="#5cb840"/>
<path d="M535.5,380 L535.5,467" stroke="#5cb840" stroke-width="1.6"/>
<polyline points="584.5,427.5 585.7,428.1 586.9,427.9 588.1,427.9 589.3,426.8 590.5,427.0 591.7,426.8 592.9,427.6 594.1,427.7 595.3,426.2 596.5,426.1 597.7,426.2 598.9,426.1 600.1,426.5 601.3,426.6 602.5,425.9 603.7,425.4 604.9,426.0 606.1,425.9 607.3,426.1 608.5,426.8 609.7,426.2 610.9,425.8 612.1,425.9 613.3,426.0 614.5,424.8 615.7,426.2 616.9,425.9 618.1,426.0 619.3,425.8 620.5,425.0 621.7,424.9 622.9,424.3 624.1,425.2 625.3,424.1 626.5,424.0 627.7,424.2 628.9,424.0 630.1,424.3 631.3,423.7 632.5,423.5 633.7,423.7 634.9,423.5 636.1,423.9 637.3,423.2 638.5,424.7 639.7,424.1 640.9,423.2 642.1,423.3 643.3,423.4 644.5,423.4 645.7,422.9 646.9,424.1 648.1,424.3 649.3,423.2 650.5,423.2 651.7,422.4 652.9,422.4 654.1,422.7 655.3,422.5 656.5,423.4 657.7,422.2 658.9,421.8 660.1,423.4 661.3,422.6 662.5,421.8 663.7,422.5 664.9,421.4 666.1,422.3 667.3,423.0 668.5,422.7 669.7,422.3 670.0,421.5" stroke="#5cb840" stroke-width="1.2" fill="none"/>
<rect x="3.5" y="546.2" width="675" height="15.1" fill="#c6c6c6"/>
<rect x="6" y="547.8" width="82.5" height="12" fill="#a6a6a6"/>
<text x="8.7" y="557.6" font-family="Liberation Sans" font-size="10" fill="#1a1a1a" text-anchor="start" textLength="78.3" lengthAdjust="spacingAndGlyphs" >WB: 1.2G-400MHz</text>
<rect x="296" y="548.8" width="73.5" height="11.4" fill="#a6a6a6"/>
<text x="298" y="557.6" font-family="Liberation Sans" font-size="10" fill="#1a1a1a" text-anchor="start" textLength="69.5" lengthAdjust="spacingAndGlyphs" >Max Input 0dBm</text>
<rect x="576" y="548" width="99" height="12" fill="#a6a6a6"/>
<text x="578" y="557.6" font-family="Liberation Sans" font-size="10" fill="#1a1a1a" text-anchor="start" textLength="95" lengthAdjust="spacingAndGlyphs" >NB: 789.2M-814.8MHz</text>
<rect x="0" y="561.3" width="681" height="1.5" fill="#eeeeee"/>
<rect x="0" y="562.8" width="681" height="1.4" fill="#1e1e1e"/>
<rect x="0" y="564.2" width="681" height="13.5" fill="#505050"/>
<rect x="3.8" y="565" width="43.9" height="11.2" fill="#3a4cb0"/>
<text x="6.7" y="574.7" font-family="Liberation Sans" font-size="10" fill="#dfe6ff" text-anchor="start" textLength="38.3" lengthAdjust="spacingAndGlyphs" >Transient</text>
<text x="51" y="574.7" font-family="Liberation Sans" font-size="10" fill="#e8e8e8" text-anchor="start" textLength="65" lengthAdjust="spacingAndGlyphs" >WB: Center 0 s</text>
<text x="122" y="574.7" font-family="Liberation Sans" font-size="10" fill="#e8e8e8" text-anchor="start" textLength="56" lengthAdjust="spacingAndGlyphs" >Span 100 ms</text>
<text x="553" y="574.7" font-family="Liberation Sans" font-size="10" fill="#e8e8e8" text-anchor="start" textLength="62" lengthAdjust="spacingAndGlyphs" >NB: Center 0 s</text>
<text x="622" y="574.7" font-family="Liberation Sans" font-size="10" fill="#e8e8e8" text-anchor="start" textLength="44.4" lengthAdjust="spacingAndGlyphs" >Span 1 ms</text>
<rect x="0" y="577.5" width="800" height="1.5" fill="#c8c8c8"/>
<rect x="0" y="579" width="800" height="18.2" fill="#555555"/>
<rect x="0" y="579" width="800" height="1.3" fill="#2c2c2c"/>
<rect x="0" y="597.2" width="800" height="1" fill="#b8b8b8"/>
<rect x="0" y="598.2" width="800" height="1.8" fill="#2a2a2a"/>
<rect x="313" y="580.8" width="81.69999999999999" height="15" fill="#3848a8"/>
<text x="315" y="592.5" font-family="Liberation Sans" font-size="11" fill="#e4eaff" text-anchor="start" textLength="77" lengthAdjust="spacingAndGlyphs" style="white-space:pre">Transient: Hold</text>
<rect x="396.6" y="580.8" width="20.399999999999977" height="15" fill="#c8c8c8"/>
<text x="398.6" y="592.5" font-family="Liberation Sans" font-size="11" fill="#a4a4a4" text-anchor="start" textLength="18" lengthAdjust="spacingAndGlyphs" style="white-space:pre">Cor</text>
<rect x="419" y="580.8" width="41" height="15" fill="#c8c8c8"/>
<text x="421" y="592.5" font-family="Liberation Sans" font-size="11" fill="#a4a4a4" text-anchor="start" textLength="38" lengthAdjust="spacingAndGlyphs" style="white-space:pre">Ctrl  0V</text>
<rect x="462" y="580.8" width="44.60000000000002" height="15" fill="#c8c8c8"/>
<text x="464" y="592.5" font-family="Liberation Sans" font-size="11" fill="#a4a4a4" text-anchor="start" textLength="41" lengthAdjust="spacingAndGlyphs" style="white-space:pre">Pow   0V</text>
<rect x="509" y="580.8" width="48" height="15" fill="#d8d890"/>
<text x="511" y="592.5" font-family="Liberation Sans" font-size="11" fill="#202020" text-anchor="start" textLength="44" lengthAdjust="spacingAndGlyphs" style="white-space:pre">Attn 5dB</text>
<rect x="559.4" y="580.8" width="42.60000000000002" height="15" fill="#c8c8c8"/>
<text x="561.4" y="592.5" font-family="Liberation Sans" font-size="11" fill="#a4a4a4" text-anchor="start" textLength="39" lengthAdjust="spacingAndGlyphs" style="white-space:pre">ExtRef1</text>
<rect x="604" y="580.8" width="43.5" height="15" fill="#c8c8c8"/>
<text x="606" y="592.5" font-family="Liberation Sans" font-size="11" fill="#a4a4a4" text-anchor="start" textLength="40" lengthAdjust="spacingAndGlyphs" style="white-space:pre">ExtTrig</text>
<rect x="649.4" y="580.8" width="26.300000000000068" height="15" fill="#c8c8c8"/>
<text x="651.4" y="592.5" font-family="Liberation Sans" font-size="11" fill="#a4a4a4" text-anchor="start" textLength="22" lengthAdjust="spacingAndGlyphs" style="white-space:pre">Svc</text>
<rect x="678.5" y="580.8" width="19.5" height="15" fill="#c8c8c8"/>
<text x="680.5" y="592.5" font-family="Liberation Sans" font-size="11" fill="#a4a4a4" text-anchor="start" textLength="16" lengthAdjust="spacingAndGlyphs" style="white-space:pre">Bat</text>
<rect x="700" y="580.8" width="96.60000000000002" height="15" fill="#c8c8c8"/>
<text x="703.5" y="592.5" font-family="Liberation Sans" font-size="11" fill="#202020" text-anchor="start" textLength="91" lengthAdjust="spacingAndGlyphs" style="white-space:pre">2016-07-21 17:37</text>
<rect x="600" y="562.5" width="200" height="37.5" fill="#ffffff" fill-opacity="0.22"/>
<text x="619" y="593.5" font-family="Liberation Sans" font-size="14" fill="#58c058" text-anchor="start" textLength="160" lengthAdjust="spacingAndGlyphs" font-weight="bold" fill-opacity="0.25">www.cntronics.com</text>
<rect x="679.3" y="37.5" width="2" height="541" fill="#c4c4c4"/>
<rect x="681.3" y="37.5" width="118.7" height="541" fill="#d8d8d8"/>
<rect x="682.4" y="37.2" width="115.6" height="29.5" fill="#f8e4a8"/>
<rect x="797.5" y="37.2" width="1.2" height="29.5" fill="#f4f0e0"/>
<text x="740.2" y="55.1" font-family="Liberation Sans" font-size="10" fill="#181810" text-anchor="middle" textLength="31.6" lengthAdjust="spacingAndGlyphs" >Trigger</text>
<rect x="682.4" y="66.7" width="116" height="1.2" fill="#f0f0f0"/>
<rect x="682.4" y="67.9" width="116" height="0.8" fill="#909090"/>
<rect x="681.3" y="68" width="2" height="394.5" fill="#141414"/>
<rect x="683.3" y="68" width="114.7" height="394.5" fill="#b0b0b0"/>
<rect x="684.5" y="68.7" width="113.5" height="26.099999999999994" fill="#b4b4b4"/>
<rect x="684.5" y="68.7" width="113.5" height="9.1" fill="#ffffff" fill-opacity="0.07"/>
<rect x="684.5" y="94.8" width="113.5" height="1.5" fill="#e2e2e2"/>
<rect x="683.3" y="96.3" width="114.7" height="1.8" fill="#1a1a1a"/>
<rect x="683.3" y="98.1" width="114.7" height="1.2" fill="#c8c8c8"/>
<rect x="684.5" y="99.7" width="113.5" height="26.599999999999994" fill="#bababa"/>
<rect x="684.5" y="99.7" width="113.5" height="9.3" fill="#ffffff" fill-opacity="0.07"/>
<rect x="684.5" y="126.3" width="113.5" height="1.5" fill="#e2e2e2"/>
<rect x="685.3" y="127.9" width="112.7" height="29.599999999999994" fill="#404040"/>
<rect x="684.5" y="157.5" width="113.5" height="29.80000000000001" fill="#bababa"/>
<rect x="684.5" y="157.5" width="113.5" height="10.4" fill="#ffffff" fill-opacity="0.07"/>
<rect x="684.5" y="187.3" width="113.5" height="1.5" fill="#e2e2e2"/>
<rect x="683.3" y="188.8" width="114.7" height="1.8" fill="#1a1a1a"/>
<rect x="683.3" y="190.60000000000002" width="114.7" height="1.2" fill="#c8c8c8"/>
<rect x="684.5" y="190.5" width="113.5" height="27.30000000000001" fill="#bababa"/>
<rect x="684.5" y="190.5" width="113.5" height="9.6" fill="#ffffff" fill-opacity="0.07"/>
<rect x="684.5" y="217.8" width="113.5" height="1.5" fill="#e2e2e2"/>
<rect x="684.5" y="219.3" width="113.5" height="28.399999999999977" fill="#b4b4b4"/>
<rect x="684.5" y="219.3" width="113.5" height="9.9" fill="#ffffff" fill-opacity="0.07"/>
<rect x="684.5" y="247.7" width="113.5" height="1.5" fill="#e2e2e2"/>
<rect x="683.3" y="249.2" width="114.7" height="1.8" fill="#1a1a1a"/>
<rect x="683.3" y="251.0" width="114.7" height="1.2" fill="#c8c8c8"/>
<rect x="684.5" y="252" width="113.5" height="26.5" fill="#bababa"/>
<rect x="684.5" y="252" width="113.5" height="9.3" fill="#ffffff" fill-opacity="0.07"/>
<rect x="684.5" y="278.5" width="113.5" height="1.5" fill="#e2e2e2"/>
<rect x="683.3" y="280.0" width="114.7" height="1.8" fill="#1a1a1a"/>
<rect x="683.3" y="281.8" width="114.7" height="1.2" fill="#c8c8c8"/>
<rect x="684.5" y="282.5" width="113.5" height="27.0" fill="#bababa"/>
<rect x="684.5" y="282.5" width="113.5" height="9.4" fill="#ffffff" fill-opacity="0.07"/>
<rect x="684.5" y="309.5" width="113.5" height="1.5" fill="#e2e2e2"/>
<rect x="683.3" y="311.0" width="114.7" height="1.8" fill="#1a1a1a"/>
<rect x="683.3" y="312.8" width="114.7" height="1.2" fill="#c8c8c8"/>
<rect x="684.5" y="312.5" width="113.5" height="27.30000000000001" fill="#bababa"/>
<rect x="684.5" y="312.5" width="113.5" height="9.6" fill="#ffffff" fill-opacity="0.07"/>
<rect x="684.5" y="339.8" width="113.5" height="1.5" fill="#e2e2e2"/>
<rect x="683.3" y="341.3" width="114.7" height="1.8" fill="#1a1a1a"/>
<rect x="683.3" y="343.1" width="114.7" height="1.2" fill="#c8c8c8"/>
<rect x="684.5" y="343.5" width="113.5" height="26.30000000000001" fill="#bababa"/>
<rect x="684.5" y="343.5" width="113.5" height="9.2" fill="#ffffff" fill-opacity="0.07"/>
<rect x="684.5" y="369.8" width="113.5" height="1.5" fill="#e2e2e2"/>
<rect x="683.3" y="371.3" width="114.7" height="1.8" fill="#1a1a1a"/>
<rect x="683.3" y="373.1" width="114.7" height="1.2" fill="#c8c8c8"/>
<rect x="684.5" y="373.5" width="113.5" height="26.69999999999999" fill="#bababa"/>
<rect x="684.5" y="373.5" width="113.5" height="9.3" fill="#ffffff" fill-opacity="0.07"/>
<rect x="684.5" y="400.2" width="113.5" height="1.5" fill="#e2e2e2"/>
<rect x="683.3" y="401.7" width="114.7" height="1.8" fill="#1a1a1a"/>
<rect x="683.3" y="403.5" width="114.7" height="1.2" fill="#c8c8c8"/>
<rect x="684.5" y="403.5" width="113.5" height="26.69999999999999" fill="#bababa"/>
<rect x="684.5" y="403.5" width="113.5" height="9.3" fill="#ffffff" fill-opacity="0.07"/>
<rect x="684.5" y="430.2" width="113.5" height="1.5" fill="#e2e2e2"/>
<rect x="683.3" y="431.7" width="114.7" height="1.8" fill="#1a1a1a"/>
<rect x="683.3" y="433.5" width="114.7" height="1.2" fill="#c8c8c8"/>
<rect x="684.5" y="433.5" width="113.5" height="28.19999999999999" fill="#bababa"/>
<rect x="684.5" y="433.5" width="113.5" height="9.9" fill="#ffffff" fill-opacity="0.07"/>
<rect x="684.5" y="461.7" width="113.5" height="1.5" fill="#e2e2e2"/>
<defs><linearGradient id="lp" x1="0" y1="0" x2="1" y2="0"><stop offset="0" stop-color="#d6d6d6"/><stop offset="0.8" stop-color="#dcdcdc"/><stop offset="1" stop-color="#e4e4e4"/></linearGradient></defs>
<rect x="681.3" y="463" width="118.7" height="115" fill="url(#lp)"/>
<rect x="681.3" y="463" width="118.7" height="1.8" fill="#ececec"/>
<text x="721.3" y="79.3" font-family="Liberation Sans" font-size="9.6" fill="#c6c6c6" text-anchor="start" textLength="46.40000000000009" lengthAdjust="spacingAndGlyphs" >Trigger to</text>
<text x="720.8" y="78.8" font-family="Liberation Sans" font-size="9.6" fill="#979797" text-anchor="start" textLength="46.40000000000009" lengthAdjust="spacingAndGlyphs" stroke="#979797" stroke-width="0.25">Trigger to</text>
<text x="721.3" y="92.6" font-family="Liberation Sans" font-size="9.6" fill="#c6c6c6" text-anchor="start" textLength="43.200000000000045" lengthAdjust="spacingAndGlyphs" >Transient</text>
<text x="720.8" y="92.1" font-family="Liberation Sans" font-size="9.6" fill="#979797" text-anchor="start" textLength="43.200000000000045" lengthAdjust="spacingAndGlyphs" stroke="#979797" stroke-width="0.25">Transient</text>
<text x="732" y="115.1" font-family="Liberation Sans" font-size="9.6" fill="#1a1a1a" text-anchor="start" textLength="19.200000000000045" lengthAdjust="spacingAndGlyphs" stroke="#1a1a1a" stroke-width="0.25">Hold</text>
<circle cx="691" cy="112.8" r="2" fill="#555555"/>
<text x="727.7" y="145.7" font-family="Liberation Sans" font-size="9.6" fill="#e4e4e4" text-anchor="start" textLength="27.0" lengthAdjust="spacingAndGlyphs" stroke="#e4e4e4" stroke-width="0.25">Single</text>
<text x="717.2" y="175.7" font-family="Liberation Sans" font-size="9.6" fill="#1a1a1a" text-anchor="start" textLength="48.799999999999955" lengthAdjust="spacingAndGlyphs" stroke="#1a1a1a" stroke-width="0.25">Continuous</text>
<text x="725.5" y="206.5" font-family="Liberation Sans" font-size="9.6" fill="#1a1a1a" text-anchor="start" textLength="32.200000000000045" lengthAdjust="spacingAndGlyphs" stroke="#1a1a1a" stroke-width="0.25">Restart</text>
<text x="726.5" y="231.7" font-family="Liberation Sans" font-size="9.6" fill="#c6c6c6" text-anchor="start" textLength="32.200000000000045" lengthAdjust="spacingAndGlyphs" >Manual</text>
<text x="726" y="231.2" font-family="Liberation Sans" font-size="9.6" fill="#979797" text-anchor="start" textLength="32.200000000000045" lengthAdjust="spacingAndGlyphs" stroke="#979797" stroke-width="0.25">Manual</text>
<text x="726.5" y="245.2" font-family="Liberation Sans" font-size="9.6" fill="#c6c6c6" text-anchor="start" textLength="31.5" lengthAdjust="spacingAndGlyphs" >Trigger</text>
<text x="726" y="244.7" font-family="Liberation Sans" font-size="9.6" fill="#979797" text-anchor="start" textLength="31.5" lengthAdjust="spacingAndGlyphs" stroke="#979797" stroke-width="0.25">Trigger</text>
<text x="725.7" y="261.2" font-family="Liberation Sans" font-size="9.6" fill="#1a1a1a" text-anchor="start" textLength="31.0" lengthAdjust="spacingAndGlyphs" stroke="#1a1a1a" stroke-width="0.25">Source</text>
<rect x="696" y="266.5" width="93.7" height="12.0" fill="#a8a8a8"/>
<rect x="696" y="266.5" width="93.7" height="1" fill="#989898"/>
<text x="711" y="275.2" font-family="Liberation Sans" font-size="9.6" fill="#1a1a1a" text-anchor="start" textLength="60.700000000000045" lengthAdjust="spacingAndGlyphs" stroke="#1a1a1a" stroke-width="0.25">Narrow Video</text>
<path d="M792,261 L797.2,265.25 L792,269.5 Z" fill="#a4a4a4"/>
<text x="705.7" y="291.7" font-family="Liberation Sans" font-size="9.6" fill="#1a1a1a" text-anchor="start" textLength="70.5" lengthAdjust="spacingAndGlyphs" stroke="#1a1a1a" stroke-width="0.25">Ext Trig Polarity</text>
<rect x="696" y="296.5" width="93.7" height="12.0" fill="#a8a8a8"/>
<rect x="696" y="296.5" width="93.7" height="1" fill="#989898"/>
<text x="722.2" y="305.2" font-family="Liberation Sans" font-size="9.6" fill="#1a1a1a" text-anchor="start" textLength="38.299999999999955" lengthAdjust="spacingAndGlyphs" stroke="#1a1a1a" stroke-width="0.25">Negative</text>
<path d="M792,292 L797.2,295.75 L792,299.5 Z" fill="#a4a4a4"/>
<text x="707.7" y="328.7" font-family="Liberation Sans" font-size="9.6" fill="#1a1a1a" text-anchor="start" textLength="67.79999999999995" lengthAdjust="spacingAndGlyphs" stroke="#1a1a1a" stroke-width="0.25">Ext Trig Output</text>
<path d="M792,322.2 L797.2,325.95 L792,329.7 Z" fill="#a4a4a4"/>
<text x="705.7" y="353" font-family="Liberation Sans" font-size="9.6" fill="#1a1a1a" text-anchor="start" textLength="71.29999999999995" lengthAdjust="spacingAndGlyphs" stroke="#1a1a1a" stroke-width="0.25">Average Trigger</text>
<rect x="696" y="357.5" width="93.7" height="12.0" fill="#a8a8a8"/>
<rect x="696" y="357.5" width="93.7" height="1" fill="#989898"/>
<text x="732.7" y="366.5" font-family="Liberation Sans" font-size="9.6" fill="#1a1a1a" text-anchor="start" textLength="18.0" lengthAdjust="spacingAndGlyphs" stroke="#1a1a1a" stroke-width="0.25">OFF</text>
<text x="696.7" y="383.7" font-family="Liberation Sans" font-size="9.6" fill="#1a1a1a" text-anchor="start" textLength="88.5" lengthAdjust="spacingAndGlyphs" stroke="#1a1a1a" stroke-width="0.25">Ext Trig Timing Adj.</text>
<rect x="696" y="389" width="93.7" height="11.199999999999989" fill="#a8a8a8"/>
<rect x="696" y="389" width="93.7" height="1" fill="#989898"/>
<text x="736.5" y="396.5" font-family="Liberation Sans" font-size="9.6" fill="#1a1a1a" text-anchor="start" textLength="10.5" lengthAdjust="spacingAndGlyphs" stroke="#1a1a1a" stroke-width="0.25">0s</text>
<text x="707.2" y="413.3" font-family="Liberation Sans" font-size="9.6" fill="#1a1a1a" text-anchor="start" textLength="69.0" lengthAdjust="spacingAndGlyphs" stroke="#1a1a1a" stroke-width="0.25">Window Couple</text>
<rect x="696" y="419" width="93.7" height="11.199999999999989" fill="#a8a8a8"/>
<rect x="696" y="419" width="93.7" height="1" fill="#989898"/>
<text x="732.7" y="427.2" font-family="Liberation Sans" font-size="9.6" fill="#1a1a1a" text-anchor="start" textLength="18.0" lengthAdjust="spacingAndGlyphs" stroke="#1a1a1a" stroke-width="0.25">OFF</text>
<text x="726.7" y="450.2" font-family="Liberation Sans" font-size="9.6" fill="#1a1a1a" text-anchor="start" textLength="29.299999999999955" lengthAdjust="spacingAndGlyphs" stroke="#1a1a1a" stroke-width="0.25">Return</text>
<rect x="799" y="36" width="1" height="427" fill="#101010"/>
</svg></body></html>
